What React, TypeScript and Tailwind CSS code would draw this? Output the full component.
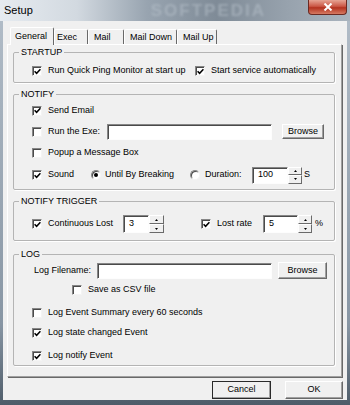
import React from "react";

function Check({ checked }: { checked?: boolean }) {
  return (
    <span className="w-[10px] h-[10px] shrink-0 bg-white border border-t-[#868686] border-l-[#868686] border-b-[#f4f4f4] border-r-[#f4f4f4] shadow-[inset_1px_1px_0_#4a4a4a] flex items-center justify-center">
      {checked && (
        <svg width="7" height="7" viewBox="0 0 7 7">
          <path d="M0.6 3.2 L2.6 5.3 L6.4 1.2" stroke="#000" strokeWidth="1.5" fill="none" />
        </svg>
      )}
    </span>
  );
}

function Radio({ checked }: { checked?: boolean }) {
  return (
    <span className="w-[10px] h-[10px] shrink-0 rounded-full bg-white border border-t-[#868686] border-l-[#868686] border-b-[#f4f4f4] border-r-[#f4f4f4] shadow-[inset_1px_1px_0_#4a4a4a] flex items-center justify-center">
      {checked && <span className="w-[4px] h-[4px] rounded-full bg-black" />}
    </span>
  );
}

function Item({ checked, label, w }: { checked?: boolean; label: string; w?: string }) {
  return (
    <span className={"flex items-center shrink-0 " + (w ?? "")}>
      <Check checked={checked} />
      <span className="ml-[6px] whitespace-nowrap">{label}</span>
    </span>
  );
}

function Field({ w, h, value }: { w: string; h: string; value?: string }) {
  return (
    <div
      className={
        "shrink-0 bg-white border border-t-[#868686] border-l-[#868686] border-b-[#fdfdfd] border-r-[#fdfdfd] shadow-[inset_1px_1px_0_#4a4a4a] flex items-center pl-[5px] " +
        w +
        " " +
        h
      }
    >
      {value}
    </div>
  );
}

function Spin({ w, h }: { w: string; h: string }) {
  const half =
    "flex-1 bg-[#f0f0f0] border border-t-[#fff] border-l-[#fff] border-b-[#6a6a6a] border-r-[#6a6a6a] flex items-center justify-center";
  return (
    <div className={"shrink-0 flex flex-col " + w + " " + h}>
      <div className={half}>
        <svg width="3" height="2" viewBox="0 0 3 2">
          <path d="M1.5 0 L3 2 L0 2 Z" fill="#000" />
        </svg>
      </div>
      <div className={half}>
        <svg width="3" height="2" viewBox="0 0 3 2">
          <path d="M0 0 L3 0 L1.5 2 Z" fill="#000" />
        </svg>
      </div>
    </div>
  );
}

function Btn({ label, cls }: { label: string; cls: string }) {
  return (
    <div
      className={
        "shrink-0 bg-[#f0f0f0] border border-t-[#fff] border-l-[#fff] border-b-[#696969] border-r-[#696969] shadow-[inset_-1px_-1px_0_#a0a0a0] flex items-center justify-center " +
        cls
      }
    >
      {label}
    </div>
  );
}

function Group({ title, h, mt, children }: { title: string; h: string; mt: string; children: React.ReactNode }) {
  return (
    <fieldset className={"ml-[5px] mr-[6px] border border-[#b4b4b4] rounded-[2px] shadow-[1px_1px_0_#fff] " + h + " " + mt}>
      <legend className="ml-[5px] px-[2px] leading-[11px]">{title}</legend>
      {children}
    </fieldset>
  );
}

export default function App() {
  const tabs = [
    { label: "Exec", w: "w-[34px]", pl: "pl-[3px]" },
    { label: "Mail", w: "w-[36px]", pl: "pl-[6px]" },
    { label: "Mail Down", w: "w-[53px]", pl: "pl-[6px]" },
    { label: "Mail Up", w: "w-[40px]", pl: "pl-[6px]" },
  ];
  return (
    <div className="w-[350px] h-[405px] flex flex-col bg-[linear-gradient(#b3bec9,#8896a4_80%,#4e5c69)] font-['Liberation_Sans',Arial,sans-serif] text-[9px] text-black overflow-hidden">
      <div className="h-[21px] shrink-0 flex items-start bg-[linear-gradient(90deg,#e6ebf0_0%,#d2d9e0_22%,#98a4b0_42%,#7f8b97_62%,#97a2ad_82%,#aab4be_100%)]">
        <span className="ml-[4px] mt-[4px] text-[11px] leading-[13px]">Setup</span>
        <span className="ml-[118px] mt-[2px] text-[17px] leading-[17px] font-bold tracking-[2px] text-[#b9c3cc] opacity-50 blur-[1px]">
          SOFTPEDIA
        </span>
        <div className="ml-auto mr-[3px] w-[39px] h-[15px] border border-[#6b2a22] border-t-0 rounded-b-[4px] bg-[linear-gradient(#e6a494,#cb5846_45%,#b3321f_55%,#d67a62)] flex items-center justify-center">
          <svg width="10" height="8" viewBox="0 0 10 8">
            <path d="M1.5 0.5 L8.5 7.5 M8.5 0.5 L1.5 7.5" stroke="#fff" strokeWidth="2" />
          </svg>
        </div>
      </div>
      <div className="flex-1 flex px-[3px] pb-[5px]">
        <div className="flex-1 bg-[#f0f0f0] flex flex-col pt-[6px]">
          <div className="flex items-end h-[17px] pl-[7px]">
            <div className="relative z-10 w-[44px] h-[18px] -mb-[1px] bg-[#f0f0f0] border-t border-l border-r border-t-[#fff] border-l-[#fff] border-r-[#696969] rounded-t-[2px] pl-[4px] pt-[3px] leading-[11px]">
              General
            </div>
            {tabs.map((t) => (
              <div
                key={t.label}
                className={
                  "h-[15px] bg-[#f0f0f0] border-t border-r border-t-[#fff] border-r-[#696969] shadow-[inset_1px_0_0_#fff] rounded-t-[2px] pt-[2px] leading-[11px] " +
                  t.w +
                  " " +
                  t.pl
                }
              >
                {t.label}
              </div>
            ))}
          </div>
          <div className="ml-[4px] mr-[5px] h-[333px] border border-t-[#fff] border-l-[#fff] border-b-[#a0a0a0] border-r-[#a0a0a0] shadow-[1px_1px_0_#696969] flex flex-col">
            <Group title="STARTUP" h="h-[36px]" mt="mt-[2px]">
              <div className="flex items-center h-[14px] mt-[6px] pl-[18px]">
                <Item checked label="Run Quick Ping Monitor at start up" w="w-[163px]" />
                <Item checked label="Start service automatically" />
              </div>
            </Group>
            <Group title="NOTIFY" h="h-[101px]" mt="mt-[6px]">
              <div className="flex items-center h-[21px] pl-[18px]">
                <Item checked label="Send Email" />
              </div>
              <div className="flex items-center h-[21px] pl-[18px]">
                <Item label="Run the Exe:" w="w-[75px]" />
                <Field w="w-[165px]" h="h-[16px]" />
                <Btn label="Browse" cls="ml-[10px] w-[42px] h-[15px]" />
              </div>
              <div className="flex items-center h-[21px] pl-[18px]">
                <Item label="Popup a Message Box" />
              </div>
              <div className="flex items-center h-[24px] pl-[18px]">
                <Item checked label="Sound" w="w-[59px]" />
                <span className="flex items-center w-[99px]">
                  <Radio checked />
                  <span className="ml-[4px]">Until By Breaking</span>
                </span>
                <span className="flex items-center w-[62px]">
                  <Radio />
                  <span className="ml-[5px]">Duration:</span>
                </span>
                <Field w="w-[36px]" h="h-[17px]" value="100" />
                <Spin w="w-[14px]" h="h-[17px]" />
                <span className="ml-[2px]">S</span>
              </div>
            </Group>
            <Group title="NOTIFY TRIGGER" h="h-[45px]" mt="mt-[6px]">
              <div className="flex items-center h-[24px] mt-[5px] pl-[18px]">
                <Item checked label="Continuous Lost" w="w-[91px]" />
                <Field w="w-[26px]" h="h-[18px]" value="3" />
                <Spin w="w-[15px]" h="h-[18px]" />
                <span className="ml-[37px]">
                  <Item checked label="Lost rate" w="w-[62px]" />
                </span>
                <Field w="w-[35px]" h="h-[18px]" value="5" />
                <Spin w="w-[14px]" h="h-[18px]" />
                <span className="ml-[3px]">%</span>
              </div>
            </Group>
            <Group title="LOG" h="h-[117px]" mt="mt-[8px]">
              <div className="flex items-center h-[21px] pl-[20px]">
                <span className="w-[63px]">Log Filename:</span>
                <Field w="w-[175px]" h="h-[16px]" />
                <Btn label="Browse" cls="ml-[6px] w-[49px] h-[17px]" />
              </div>
              <div className="flex items-center h-[18px] pl-[58px]">
                <Item label="Save as CSV file" />
              </div>
              <div className="flex items-center h-[20px] mt-[4px] pl-[18px]">
                <Item label="Log Event Summary every 60 seconds" />
              </div>
              <div className="flex items-center h-[20px] pl-[18px]">
                <Item checked label="Log state changed Event" />
              </div>
              <div className="flex items-center h-[18px] mt-[4px] pl-[18px]">
                <Item checked label="Log notify Event" />
              </div>
            </Group>
          </div>
          <div className="flex justify-end mt-[4px] pr-[4px] gap-[14px]">
            <Btn label="Cancel" cls="w-[59px] h-[18px] outline outline-1 outline-[#2a2a2a] -outline-offset-1" />
            <Btn label="OK" cls="w-[58px] h-[18px]" />
          </div>
        </div>
      </div>
    </div>
  );
}
